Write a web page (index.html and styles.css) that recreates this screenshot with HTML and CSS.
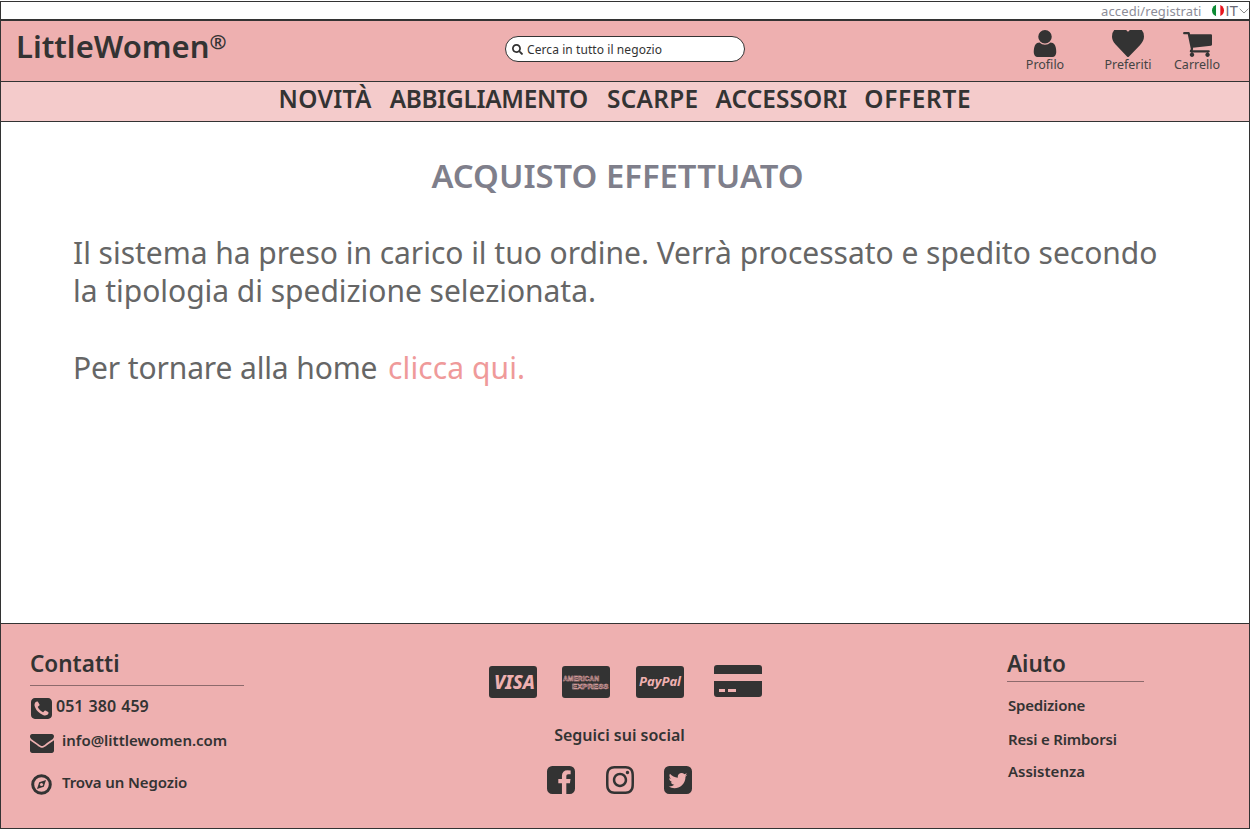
FILE: index.html
```html
<!DOCTYPE html>
<html lang="it">
<head>
<meta charset="utf-8">
<title>LittleWomen</title>
<link rel="stylesheet" href="styles.css">
</head>
<body>
<div class="page">
  <div class="topbar">
    <a class="login">accedi/registrati</a>
    <span class="lang">
      <svg class="flag" viewBox="0 0 14 14"><defs><clipPath id="fc"><ellipse cx="7" cy="7" rx="6.5" ry="6.5"/></clipPath></defs><g clip-path="url(#fc)"><rect width="5" height="14" fill="#0b8a32"/><rect x="5" width="4.5" height="14" fill="#fff"/><rect x="9.5" width="4.5" height="14" fill="#e8141c"/></g></svg>
      <span class="lang-code">IT</span>
      <svg class="chev" viewBox="0 0 10 6"><path d="M.7.8 5 5 9.3.8" fill="none" stroke="#888" stroke-width="1"/></svg>
    </span>
  </div>
  <header class="header">
    <div class="logo">LittleWomen<sup>®</sup></div>
    <div class="search">
      <svg class="search-ico" viewBox="0 0 512 512"><path d="M505 442.7L405.3 343c-4.5-4.5-10.6-7-17-7H372c27.6-35.3 44-79.7 44-128C416 93.1 322.9 0 208 0S0 93.1 0 208s93.1 208 208 208c48.3 0 92.7-16.4 128-44v16.3c0 6.4 2.5 12.5 7 17l99.7 99.7c9.4 9.4 24.6 9.4 33.9 0l28.3-28.3c9.4-9.4 9.4-24.6.1-34zM208 336c-70.7 0-128-57.2-128-128 0-70.7 57.2-128 128-128 70.7 0 128 57.2 128 128 0 70.7-57.2 128-128 128z"/></svg>
      <span class="search-txt">Cerca in tutto il negozio</span>
    </div>
    <nav class="actions">
      <a class="action act-user">
        <svg class="ico-user" viewBox="256 128 1280 1536"><path d="M1536 1399q0 109-62.500 187t-150.500 78h-854q-88 0-150.500-78t-62.500-187q0-85 8.500-160.500t31.500-152 58.500-131 94-89 134.500-34.500q131 128 313 128t313-128q76 0 134.500 34.500t94 89 58.500 131 31.500 152 8.500 160.500zm-256-887q0 159-112.500 271.500t-271.500 112.500-271.500-112.500-112.500-271.500 112.500-271.500 271.500-112.500 271.500 112.500 112.500 271.500z"/></svg>
        <span>Profilo</span>
      </a>
      <a class="action act-heart">
        <svg class="ico-heart" viewBox="0 256 1792 1408" preserveAspectRatio="none"><path d="M896 1664q-26 0-44-18l-624-602q-10-8-27.500-26t-55.500-65.500-68-97.500-53.500-121-23.500-138q0-220 127-344t351-124q62 0 126.500 21.500t120 58 95.500 68.500 76 68q36-36 76-68t95.500-68.500 120-58 126.500-21.500q224 0 351 124t127 344q0 221-229 450l-623 600q-18 18-44 18z"/></svg>
        <span>Preferiti</span>
      </a>
      <a class="action act-cart">
        <svg class="ico-cart" viewBox="0 256 1728 1408" preserveAspectRatio="none"><path d="M704 1536q0 52-38 90t-90 38-90-38-38-90 38-90 90-38 90 38 38 90zm896 0q0 52-38 90t-90 38-90-38-38-90 38-90 90-38 90 38 38 90zm128-1088v512q0 24-16.500 42.500t-40.500 21.500l-1044 122q13 60 13 70 0 16-24 64h920q26 0 45 19t19 45-19 45-45 19h-1024q-26 0-45-19t-19-45q0-11 8-31.500t16-36 21.500-40 15.500-29.500l-177-823h-204q-26 0-45-19t-19-45 19-45 45-19h256q16 0 28.500 6.500t19.500 15.500 13 24.500 8 26 5.500 29.500 4.500 26h1201q26 0 45 19t19 45z"/></svg>
        <span>Carrello</span>
      </a>
    </nav>
  </header>
  <nav class="menu">
    <a class="m-nov">NOVITÀ</a><a class="m-abb">ABBIGLIAMENTO</a><a class="m-sca">SCARPE</a><a class="m-acc">ACCESSORI</a><a class="m-off">OFFERTE</a>
  </nav>
  <main class="main">
    <h1 class="title">ACQUISTO EFFETTUATO</h1>
    <p class="msg">Il sistema ha preso in carico il tuo ordine. Verrà processato e spedito secondo la tipologia di spedizione selezionata.</p>
    <p class="back">Per tornare alla home <a class="link">clicca qui.</a></p>
  </main>
  <footer class="footer">
    <section class="col-left">
      <h2 class="foot-h">Contatti</h2>
      <div class="contact c-phone">
        <svg class="ico-phone" viewBox="128 128 1536 1536"><path d="M1408 1193q0-11-2-16-3-8-38.500-29.500t-88.500-49.500l-53-29q-5-3-19-13t-25-15-21-5q-18 0-47 32.500t-57 65.500-44 33q-7 0-16.500-3.500t-15.500-6.500-17-9.500-14-8.500q-99-55-170-126.500t-127-170.500q-2-3-8.500-14t-9.500-17-6.500-15.500-3.500-16.500q0-13 20.500-33.500t45-38.500 45-39.500 20.500-36.500q0-10-5-21t-15-25-13-19q-3-6-15-28.500t-25-45.500-26.500-47.500-25-40.500-16.500-18-16-2q-48 0-101 22-46 21-80 94.500t-34 130.500q0 16 2.500 34t5 30.500 9 33 10 29.500 12.500 33 11 30q60 164 216.500 320.500t320.500 216.500q6 2 30 11t33 12.500 29.500 10 33 9 30.500 5 34 2.500q57 0 130.500-34t94.500-80q22-53 22-101zm256-777v960q0 119-84.500 203.500t-203.500 84.500h-960q-119 0-203.500-84.500t-84.500-203.500v-960q0-119 84.500-203.500t203.500-84.500h960q119 0 203.500 84.500t84.500 203.500z"/></svg>
        <span class="phone-num">051 380 459</span>
      </div>
      <div class="contact c-mail">
        <svg class="ico-mail" viewBox="0 256 1792 1408" preserveAspectRatio="none"><path d="M1792 710v794q0 66-47 113t-113 47h-1472q-66 0-113-47t-47-113v-794q44 49 101 87 362 246 497 345 57 42 92.500 65.500t94.500 48 110 24.500h2q51 0 110-24.500t94.500-48 92.500-65.500q170-123 498-345 57-39 100-87zm0-294q0 79-49 151t-122 123q-376 261-468 325-10 7-42.500 30.500t-54 38-52 32.500-57.500 27-50 9h-2q-23 0-50-9t-57.500-27-52-32.500-54-38-42.500-30.500q-91-64-262-182.500t-205-142.500q-62-42-117-115.500t-55-136.500q0-78 41.500-130t118.500-52h1472q65 0 112.500 47t47.500 113z"/></svg>
        <span class="mail-txt">info@littlewomen.com</span>
      </div>
      <div class="contact c-shop">
        <svg class="ico-compass" viewBox="0 0 21 21"><circle class="ring" cx="10.500" cy="10.500" r="8.800"/><path d="M15 6 12.800 12.800 6 15 8.200 8.200Z"/><circle class="hole" cx="10.500" cy="10.500" r="1.600"/></svg>
        <span class="shop-txt">Trova un Negozio</span>
      </div>
    </section>
    <section class="col-mid">
      <div class="cards">
        <svg class="pay" viewBox="0 0 48 32"><rect width="48" height="32" rx="3"/><text class="t-visa" x="5" y="23" textLength="41" lengthAdjust="spacingAndGlyphs">VISA</text></svg>
        <svg class="pay" viewBox="0 0 48 32"><rect width="48" height="32" rx="3"/><text class="t-amex" x="1" y="14.500" textLength="36" lengthAdjust="spacingAndGlyphs">AMERICAN</text><text class="t-amex" x="10" y="23" textLength="36.500" lengthAdjust="spacingAndGlyphs">EXPRESS</text></svg>
        <svg class="pay pay-pp" viewBox="0 0 48 32"><rect width="48" height="32" rx="3"/><text class="t-pp" x="3" y="20" textLength="42" lengthAdjust="spacingAndGlyphs">PayPal</text></svg>
        <svg class="pay pay-card" viewBox="0 0 48 32"><path d="M3 0H45A3 3 0 0 1 48 3V9H0V3A3 3 0 0 1 3 0Z"/><path fill-rule="evenodd" d="M0 16H48V29A3 3 0 0 1 45 32H3A3 3 0 0 1 0 29ZM5 24V27H11V24ZM14 24V27H22V24Z"/></svg>
      </div>
      <div class="follow">Seguici sui social</div>
      <div class="socials">
        <svg class="soc" viewBox="128 128 1536 1536"><path d="M1376 128q119 0 203.500 84.500t84.500 203.500v960q0 119-84.500 203.500t-203.500 84.500h-188v-595h199l30-232h-229v-148q0-56 23.500-84t91.500-28l122-1v-207q-63-9-178-9-136 0-217.500 80t-81.500 226v171h-200v232h200v595h-532q-119 0-203.500-84.500t-84.500-203.500v-960q0-119 84.500-203.500t203.500-84.500h960z"/></svg>
        <svg class="soc" viewBox="0 32 448 448"><path d="M224.100 141c-63.600 0-114.900 51.300-114.900 114.900s51.300 114.900 114.900 114.900S339 319.500 339 255.900 287.700 141 224.100 141zm0 189.600c-41.100 0-74.700-33.500-74.700-74.700s33.500-74.700 74.700-74.700 74.700 33.500 74.700 74.700-33.600 74.700-74.700 74.700zm146.400-194.300c0 14.900-12 26.800-26.800 26.800-14.900 0-26.800-12-26.800-26.800s12-26.800 26.800-26.800 26.800 12 26.800 26.800zm76.100 27.200c-1.700-35.900-9.900-67.700-36.200-93.900-26.200-26.200-58-34.400-93.900-36.200-37-2.100-147.900-2.100-184.900 0-35.800 1.700-67.600 9.900-93.900 36.100s-34.400 58-36.200 93.900c-2.100 37-2.100 147.900 0 184.900 1.700 35.900 9.900 67.700 36.200 93.900s58 34.400 93.900 36.200c37 2.100 147.900 2.100 184.900 0 35.900-1.700 67.700-9.900 93.900-36.200 26.200-26.200 34.400-58 36.200-93.900 2.100-37 2.100-147.800 0-184.800zM398.800 388c-7.800 19.600-22.900 34.700-42.600 42.600-29.500 11.700-99.500 9-132.100 9s-102.700 2.600-132.100-9c-19.600-7.800-34.700-22.900-42.600-42.600-11.700-29.500-9-99.500-9-132.100s-2.600-102.700 9-132.100c7.800-19.600 22.900-34.700 42.600-42.600 29.500-11.700 99.500-9 132.100-9s102.700-2.600 132.100 9c19.600 7.800 34.700 22.900 42.600 42.600 11.700 29.500 9 99.500 9 132.100s2.700 102.700-9 132.100z"/></svg>
        <svg class="soc" viewBox="128 128 1536 1536"><path d="M1408 610q-56 25-121 34 68-40 93-117-65 38-134 51-61-66-153-66-87 0-148.500 61.500t-61.500 148.500q0 29 5 48-129-7-242-65t-192-155q-29 50-29 106 0 114 91 175-47-1-100-26v2q0 75 50 133.500t123 72.500q-29 8-51 8-13 0-39-4 21 63 74.500 104t121.500 42q-116 90-261 90-26 0-50-3 148 94 322 94 112 0 210-35.500t168-95 120.500-137 75-162 24.500-168.500q0-18-1-27 63-45 105-109zm256-194v960q0 119-84.500 203.500t-203.500 84.500h-960q-119 0-203.500-84.500t-84.500-203.500v-960q0-119 84.500-203.500t203.500-84.500h960q119 0 203.500 84.500t84.500 203.500z"/></svg>
      </div>
    </section>
    <section class="col-right">
      <h2 class="foot-h foot-h-r">Aiuto</h2>
      <a class="help h1">Spedizione</a>
      <a class="help h2">Resi e Rimborsi</a>
      <a class="help h3">Assistenza</a>
    </section>
  </footer>
</div>
</body>
</html>
```
FILE: styles.css
```css
* { box-sizing: border-box; }
html, body { margin: 0; padding: 0; background: #fff; }
body { font-family: "Noto Sans", "Open Sans", sans-serif; color: #333; }
svg { display: block; fill: #333; }
h1, h2, p { margin: 0; font-weight: inherit; }

.page {
  width: 1250px;
  height: 828px;
  margin-top: 1px;
  border: 1px solid #333;
  display: flex;
  flex-direction: column;
  overflow: hidden;
}

.topbar {
  height: 17px;
  flex: none;
  display: flex;
  justify-content: flex-end;
  align-items: center;
  font-size: 13px;
}
.login { color: #8d8d98; margin-right: 9px; letter-spacing: .12px; }
.lang { display: flex; align-items: center; color: #6a6a75; font-size: 14px; }
.lang-code { font-family: "Liberation Sans", sans-serif; }
.flag { width: 14px; height: 13px; margin-right: 1px; }
.chev { width: 10px; height: 6px; margin-left: 1px; }

.header {
  height: 63px;
  flex: none;
  background: #eeb0b0;
  border-top: 2px solid #333;
  border-bottom: 1px solid #333;
  display: grid;
  grid-template-columns: 504px 240px 1fr;
  align-items: center;
}
.logo { padding-left: 15px; font-size: 31px; font-weight: 600; line-height: 1; margin-top: -10px; }
.logo sup { font-size: 20.500px; line-height: 0; vertical-align: 9px; }

.search {
  height: 26px;
  background: #fff;
  border: 1px solid #333;
  border-radius: 13px;
  display: flex;
  align-items: center;
  padding-left: 6px;
  gap: 4px;
  font-size: 12px;
  margin-top: -4px;
}
.search-txt { letter-spacing: .08px; }
.search-ico { width: 11px; height: 11px; }

.actions { display: block; height: 100%; position: relative; }
.action {
  position: absolute;
  top: 9px;
  width: 70px;
  height: 46px;
  display: flex;
  flex-direction: column;
  align-items: center;
  font-size: 12.5px;
  color: #444;
  line-height: 14px;
}
.action svg { flex: none; }
.action span { position: absolute; top: 28px; white-space: nowrap; }
.act-user { left: 265px; }
.act-heart { left: 348px; }
.act-cart { left: 417px; }
.ico-user { width: 24px; height: 27px; }
.ico-heart { width: 32px; height: 27px; }
.ico-cart { width: 30px; height: 25px; margin-top: 2px; }

.menu {
  height: 40px;
  flex: none;
  background: #f4cbcb;
  border-bottom: 1px solid #333;
  display: flex;
  justify-content: center;
  align-items: center;
  gap: 18px;
  padding: 0 0 6px 0;
  font-size: 24.4px;
  font-weight: 600;
  color: #333;
}
.m-nov { letter-spacing: .3px; }
.m-abb { letter-spacing: -.3px; }
.m-sca { letter-spacing: .3px; margin-left: 1px; }
.m-acc { letter-spacing: .1px; margin-left: -1px; }
.m-off { letter-spacing: .7px; margin-left: -1px; }

.main {
  flex: 1;
  padding: 0 72px;
  color: #666;
  font-size: 30px;
  line-height: 38px;
}
.title {
  font-size: 32.800px;
  font-weight: 600;
  color: #7f7f8b;
  text-align: center;
  padding-right: 15px;
  margin-top: 35px;
  line-height: 38px;
}
.msg { margin-top: 39px; letter-spacing: -.03px; }
.back { margin-top: 39px; letter-spacing: -.13px; }
.link { color: #ef9a9a; margin-left: 3px; letter-spacing: .1px; }

.footer {
  height: 205px;
  flex: none;
  background: #eeb0b0;
  border-top: 1px solid #333;
  display: grid;
  grid-template-columns: 214px 1fr 242px;
  padding-left: 29px;
}
.foot-h {
  font-size: 22.500px;
  font-weight: 600;
  line-height: 30px;
  border-bottom: 1px solid #8d6a6c;
  padding-bottom: 6px;
  margin-top: 25px;
}
.foot-h-r { width: 137px; padding-bottom: 2px; }
.contact {
  display: flex;
  align-items: flex-start;
  font-size: 15px;
  font-weight: 600;
  line-height: 20px;
}
.c-phone { margin-top: 12px; gap: 4px; padding-left: 1px; }
.phone-num { font-size: 16px; word-spacing: 1px; margin-top: -2px; }
.c-mail { margin-top: 15px; gap: 8px; }
.mail-txt { margin-top: -4px; }
.c-shop { margin-top: 21px; gap: 10px; padding-left: 1px; }
.shop-txt { letter-spacing: -.1px; margin-top: -2px; }
.ico-phone { width: 21px; height: 21px; }
.ico-mail { width: 24px; height: 19px; }
.ico-compass { width: 21px; height: 21px; }
.ring { fill: none; stroke: #333; stroke-width: 3px; }
.hole { fill: #eeb0b0; }

.col-mid { display: flex; flex-direction: column; align-items: center; padding-right: 12px; }
.cards { display: flex; gap: 25px; margin: 42px 0 0 12px; }
.pay { width: 48px; height: 32px; }
.pay-pp { margin-left: 1px; }
.pay-card { margin-top: -1px; margin-left: 5px; }
.t-visa { font: italic 800 20px "Noto Sans", sans-serif; fill: #eeb0b0; }
.t-amex { font: 700 8px "Liberation Sans", sans-serif; fill: #333; stroke: #eeb0b0; stroke-width: .5px; }
.t-pp { font: italic 700 13px "Noto Sans", sans-serif; fill: #eeb0b0; }
.follow { font-size: 16px; font-weight: 600; line-height: 20px; margin-top: 27px; }
.socials { display: flex; gap: 30.500px; margin-top: 21px; }
.soc { width: 28px; height: 28px; }

.col-right { display: flex; flex-direction: column; align-items: flex-start; }
.help { font-size: 15px; font-weight: 600; line-height: 20px; padding-left: 1px; }
.h1 { margin-top: 13px; letter-spacing: -.2px; }
.h2 { margin-top: 14px; letter-spacing: -.2px; }
.h3 { margin-top: 12px; }
```
